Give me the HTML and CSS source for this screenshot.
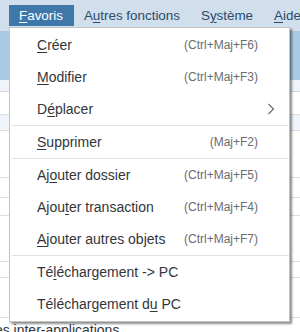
FILE: index.html
```html
<!DOCTYPE html>
<html lang="fr">
<head>
  <meta charset="UTF-8">
  <meta name="viewport" content="width=device-width, initial-scale=1.0">
  <title>Favoris</title>
  <link rel="stylesheet" href="styles.css">
</head>
<body>
  <div class="menubar">
    <span class="tab active"><u>F</u>avoris</span>
    <span class="tab">A<u>u</u>tres fonctions</span>
    <span class="tab">S<u>y</u>stème</span>
    <span class="tab"><u>A</u>ide</span>
  </div>
  <div class="toolbar"></div>
  <div class="subhead"></div>

  <div class="content">
    <div class="row h23"></div>
    <div class="row h16 light"></div>
    <div class="row h47"></div>
    <div class="row h20"><span class="frag link">Notifications</span></div>
    <div class="row h18"><span class="frag link ital">Mes tâches SAP A</span></div>
    <div class="row h46"><span class="frag link">Liste des factures ill</span></div>
    <div class="row h16"><span class="frag">Mes serveurs serv</span></div>
    <div class="row h40"></div>
    <div class="row h20 last"><span class="frag wide">Services inter-applications</span></div>
  </div>

  <div class="dropdown">
    <div class="item"><span class="label"><u>C</u>réer</span><span class="key">(Ctrl+Maj+F6)</span></div>
    <div class="item"><span class="label"><u>M</u>odifier</span><span class="key">(Ctrl+Maj+F3)</span></div>
    <div class="item"><span class="label">D<u>é</u>placer</span>
      <svg class="chevron" width="8" height="12" viewBox="0 0 8 12"><path d="M1.5 1 L6.5 6 L1.5 11" fill="none" stroke="#6a6d70" stroke-width="1.2"/></svg>
    </div>
    <div class="sep"></div>
    <div class="item"><span class="label"><u>S</u>upprimer</span><span class="key">(Maj+F2)</span></div>
    <div class="sep"></div>
    <div class="item"><span class="label">Aj<u>o</u>uter dossier</span><span class="key">(Ctrl+Maj+F5)</span></div>
    <div class="item"><span class="label">Ajou<u>t</u>er transaction</span><span class="key">(Ctrl+Maj+F4)</span></div>
    <div class="item"><span class="label"><u>A</u>jouter autres objets</span><span class="key">(Ctrl+Maj+F7)</span></div>
    <div class="sep"></div>
    <div class="item"><span class="label">Té<u>l</u>échargement -&gt; PC</span></div>
    <div class="item"><span class="label">Téléchargement d<u>u</u> PC</span></div>
  </div>
</body>
</html>
```

FILE: styles.css
```css
body {
  margin: 0;
  font-family: "Liberation Sans", Arial, sans-serif;
  background-color: #ffffff;
  width: 300px;
  height: 332px;
  overflow: hidden;
  position: relative;
}
u {
  text-decoration: underline;
  text-underline-offset: 2px;
}
.menubar {
  height: 31px;
  background-color: #d1dfed;
  display: flex;
  align-items: flex-start;
  padding-left: 9px;
  box-sizing: border-box;
  overflow: hidden;
  white-space: nowrap;
}
.tab {
  margin-top: 5px;
  height: 21px;
  line-height: 22px;
  padding: 0 11px 0 10px;
  font-size: 13.4px;
  color: #2b4b6c;
}
.tab.active {
  background-color: #3e77a9;
  color: #ffffff;
}
.toolbar {
  height: 49px;
  background-color: #a9c8e2;
}
.subhead {
  height: 11px;
  background-color: #eef4fa;
  border-bottom: 1px solid #d4d4d4;
}
.content {
  display: flex;
  flex-direction: column;
}
.row {
  box-sizing: border-box;
  border-bottom: 1px solid #dedede;
  display: flex;
  align-items: center;
  font-size: 14px;
  color: #32363a;
  overflow: hidden;
  white-space: nowrap;
}
.h16 { height: 16px; }
.h18 { height: 18px; }
.h20 { height: 20px; }
.h23 { height: 23px; }
.h40 { height: 40px; }
.h46 { height: 46px; }
.h47 { height: 47px; }
.row.light {
  background-color: #eef4fa;
}
.row.last {
  border-bottom: none;
  align-items: flex-end;
}
.frag {
  margin-left: -140px;
}
.frag.wide {
  margin-left: -44px;
}
.link {
  color: #0a5fb4;
}
.ital {
  font-style: italic;
}
.dropdown {
  position: absolute;
  left: 9px;
  top: 27px;
  width: 279px;
  background-color: #ffffff;
  border: 1px solid #c4c4c4;
  padding: 1px 0;
  box-shadow: 2px 2px 2px rgba(0,0,0,0.45);
}
.item {
  height: 32px;
  display: flex;
  align-items: center;
  justify-content: space-between;
  padding: 0 31px 0 27px;
}
.label {
  font-size: 14px;
  color: #32363a;
  white-space: nowrap;
}
.key {
  font-size: 12px;
  color: #6a6d70;
  white-space: nowrap;
}
.chevron {
  margin-right: -17px;
}
.sep {
  height: 1px;
  margin-left: 2px;
  background-color: #e1e1e1;
}
```
